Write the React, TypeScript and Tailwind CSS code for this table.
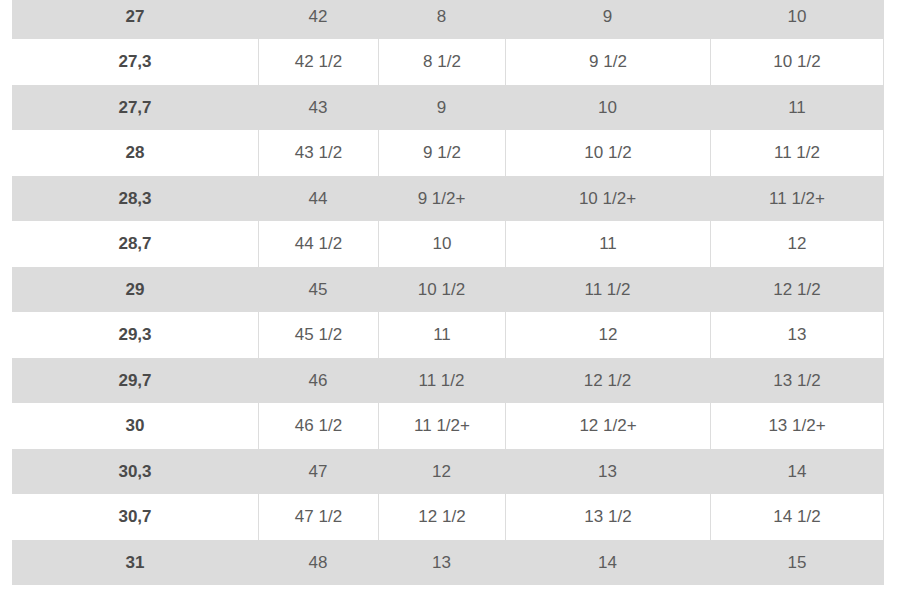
const rows: string[][] = [
  ["27", "42", "8", "9", "10"],
  ["27,3", "42 1/2", "8 1/2", "9 1/2", "10 1/2"],
  ["27,7", "43", "9", "10", "11"],
  ["28", "43 1/2", "9 1/2", "10 1/2", "11 1/2"],
  ["28,3", "44", "9 1/2+", "10 1/2+", "11 1/2+"],
  ["28,7", "44 1/2", "10", "11", "12"],
  ["29", "45", "10 1/2", "11 1/2", "12 1/2"],
  ["29,3", "45 1/2", "11", "12", "13"],
  ["29,7", "46", "11 1/2", "12 1/2", "13 1/2"],
  ["30", "46 1/2", "11 1/2+", "12 1/2+", "13 1/2+"],
  ["30,3", "47", "12", "13", "14"],
  ["30,7", "47 1/2", "12 1/2", "13 1/2", "14 1/2"],
  ["31", "48", "13", "14", "15"],
];

const widths = ["w-[246px]", "w-[120px]", "w-[127px]", "w-[205px]", "w-[174px]"];

export default function App() {
  return (
    <div className="w-[897px] h-[595px] bg-white overflow-hidden" style={{ fontFamily: '"Liberation Sans", Arial, sans-serif' }}>
      <div className="ml-[12px] mt-[-6.5px] w-[872px] flex flex-col">
        {rows.map((r, i) => {
          const gray = i % 2 === 0;
          return (
            <div key={i} className={`flex h-[45.5px] ${gray ? "bg-[#dcdcdc]" : "bg-white"}`}>
              {r.map((c, j) => (
                <div
                  key={j}
                  className={`${widths[j]} flex items-center justify-center text-[17px] ${j === 0 ? "font-bold text-[#4a4a4a]" : "text-[#5c5c5c]"} ${!gray && j > 0 ? "border-l border-[#dddddd]" : ""} ${!gray && j === 4 ? "border-r border-[#dddddd]" : ""}`}
                >
                  {c}
                </div>
              ))}
            </div>
          );
        })}
      </div>
    </div>
  );
}
